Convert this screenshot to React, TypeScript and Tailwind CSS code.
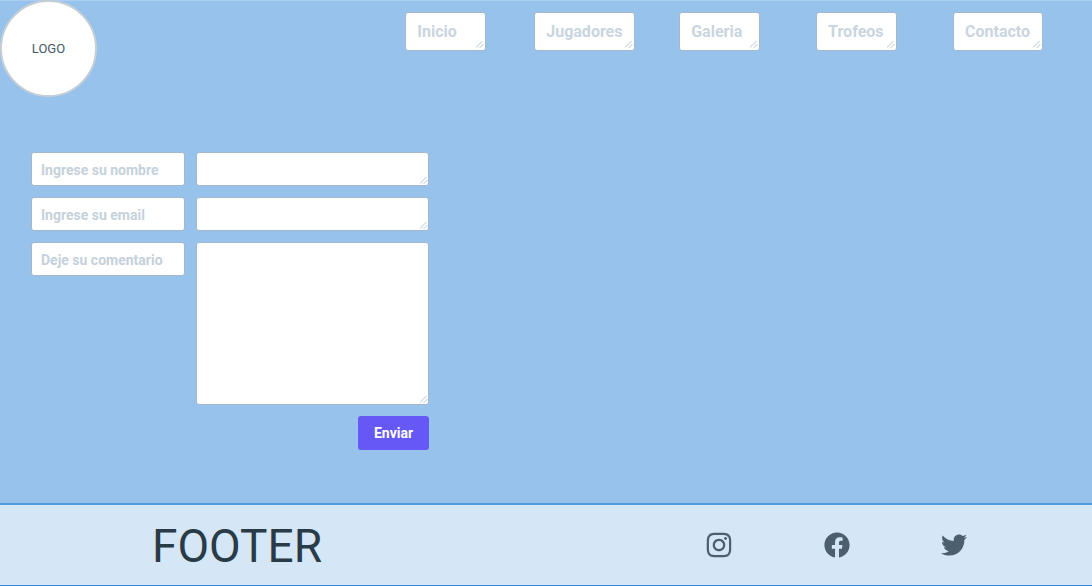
import React from "react";
import { FaFacebook, FaInstagram, FaTwitter } from "react-icons/fa";

const links = ["Inicio", "Jugadores", "Galeria", "Trofeos", "Contacto"];

const boxStyle = "rounded-[3px] border border-[#a3b8ca] bg-white";

function Grip() {
  return (
    <svg
      aria-hidden="true"
      viewBox="0 0 9 9"
      className="pointer-events-none absolute right-px bottom-px size-[9px]"
      fill="none"
      stroke="#dbe2e8"
      strokeWidth="1.6"
    >
      <path d="M1 7.5 7.5 1M4.5 8 8.5 4" />
    </svg>
  );
}

function Field({ id, label, tall = false }: { id: string; label: string; tall?: boolean }) {
  return (
    <>
      <label
        htmlFor={id}
        className={`${boxStyle} flex h-[34px] items-center px-[9px] pt-[2px] text-sm font-bold text-[#c5d1db]`}
      >
        {label}
      </label>
      <div className="relative flex">
        <textarea
          id={id}
          className={`${boxStyle} w-full resize-none px-2 py-1 text-sm text-[#4b5f6f] outline-none ${tall ? "h-[163px]" : "h-[34px]"}`}
        />
        <Grip />
      </div>
    </>
  );
}

export default function App() {
  return (
    <div className="flex min-h-screen flex-col border-t border-[#aacff0] bg-[#96c2eb] font-['Roboto',sans-serif]">
      <header className="-mt-px flex items-start justify-between pr-[50px]">
        <a
          href="#logo"
          className="flex size-[97px] items-center justify-center rounded-full border-2 border-[#c6ced6] bg-white text-[13px] text-[#455a69]"
        >
          LOGO
        </a>
        <nav className="grid w-[61.1%] grid-cols-[129fr_145fr_137fr_137fr_89fr] pt-3">
          {links.map((link) => (
            <a
              key={link}
              href={`#${link.toLowerCase()}`}
              className={`${boxStyle} relative flex h-[39px] min-w-[81px] items-center justify-self-start pr-3 pl-[11px] font-bold text-[#c9d5df]`}
            >
              {link}
              <Grip />
            </a>
          ))}
        </nav>
      </header>

      <main className="grow px-[31px] pt-[55px] pb-12">
        <form
          className="grid max-w-[398px] grid-cols-[154fr_233fr] items-start gap-x-[11px] gap-y-[11px]"
          onSubmit={(event) => event.preventDefault()}
        >
          <Field id="nombre" label="Ingrese su nombre" />
          <Field id="email" label="Ingrese su email" />
          <Field id="comentario" label="Deje su comentario" tall />
          <button
            type="submit"
            className="col-start-2 h-[34px] w-[71px] justify-self-end rounded-[3px] bg-[#6558f5] text-sm font-bold text-white"
          >
            Enviar
          </button>
        </form>
      </main>

      <footer className="flex h-[83px] items-center justify-between border-t-2 border-b border-t-[#4f9bde] border-b-[#2f8bdc] bg-[#d5e6f6] pr-[125px] pl-[152px]">
        <p className="pt-[2px] text-[46px] leading-[52px] text-[#293b47]">FOOTER</p>
        <div className="flex items-center gap-[91px] text-[26px] text-[#4b5f6f]">
          <a href="#instagram" aria-label="Instagram" className="text-[28px]">
            <FaInstagram />
          </a>
          <a href="#facebook" aria-label="Facebook">
            <FaFacebook />
          </a>
          <a href="#twitter" aria-label="Twitter">
            <FaTwitter />
          </a>
        </div>
      </footer>
    </div>
  );
}
